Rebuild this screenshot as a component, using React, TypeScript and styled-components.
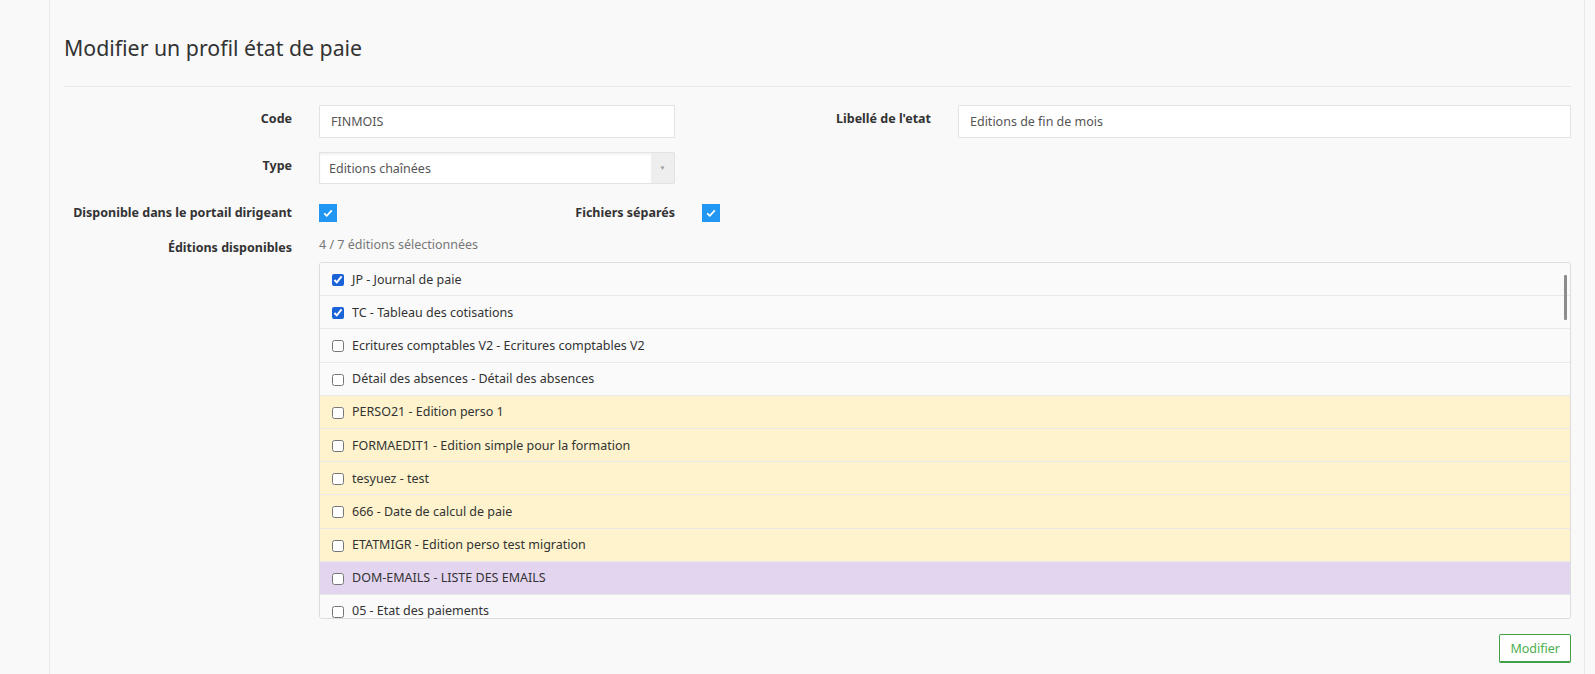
import React from "react";
import styled, { createGlobalStyle } from "styled-components";

const GlobalStyle = createGlobalStyle`
  html, body {
    margin: 0;
    padding: 0;
    background: #f9f9f9;
    font-family: "Noto Sans", "Open Sans", Arial, sans-serif;
    color: #333;
  }
  * { box-sizing: border-box; }
`;

interface Edition {
  label: string;
  checked?: boolean;
  tone?: "plain" | "custom" | "domain";
}

const editions: Edition[] = [
  { label: "JP - Journal de paie", checked: true },
  { label: "TC - Tableau des cotisations", checked: true },
  { label: "Ecritures comptables V2 - Ecritures comptables V2" },
  { label: "Détail des absences - Détail des absences" },
  { label: "PERSO21 - Edition perso 1", tone: "custom" },
  { label: "FORMAEDIT1 - Edition simple pour la formation", tone: "custom" },
  { label: "tesyuez - test", tone: "custom" },
  { label: "666 - Date de calcul de paie", tone: "custom" },
  { label: "ETATMIGR - Edition perso test migration", tone: "custom" },
  { label: "DOM-EMAILS - LISTE DES EMAILS", tone: "domain" },
  { label: "05 - Etat des paiements" },
];

const toneColors = {
  plain: "#fafafa",
  custom: "#fef3cd",
  domain: "#e3d5f0",
};

function BlueCheck() {
  return (
    <CheckBox>
      <svg width="12" height="12" viewBox="0 0 12 12">
        <path d="M2.2 6.4 L4.8 8.8 L9.8 3.4" fill="none" stroke="#fff" strokeWidth="1.8" />
      </svg>
    </CheckBox>
  );
}

export default function App() {
  return (
    <>
      <GlobalStyle />
      <Shell>
        <Gutter />
        <Main>
          <Title>Modifier un profil état de paie</Title>
          <Divider />
          <Form>
            <FormRow>
              <Label>Code</Label>
              <TextInput defaultValue="FINMOIS" />
              <Label>Libellé de l'etat</Label>
              <TextInput defaultValue="Editions de fin de mois" />
            </FormRow>

            <FormRow $mt={14}>
              <Label>Type</Label>
              <Select>
                <SelectValue>Editions chaînées</SelectValue>
                <SelectArrow>▼</SelectArrow>
              </Select>
            </FormRow>

            <FormRow $mt={20}>
              <Label $flat>Disponible dans le portail dirigeant</Label>
              <CheckCell>
                <BlueCheck />
                <Label $flat>Fichiers séparés</Label>
              </CheckCell>
              <BlueCheck />
            </FormRow>

            <FormRow $mt={14}>
              <Label $top={3}>Éditions disponibles</Label>
              <Editions>
                <Count>4 / 7 éditions sélectionnées</Count>
                <ListBox>
                  {editions.map((e) => (
                    <ListRow key={e.label} $tone={e.tone ?? "plain"}>
                      <input type="checkbox" defaultChecked={e.checked} />
                      <span>{e.label}</span>
                    </ListRow>
                  ))}
                  <Thumb />
                </ListBox>
              </Editions>
            </FormRow>

            <Actions>
              <SubmitButton type="button">Modifier</SubmitButton>
            </Actions>
          </Form>
        </Main>
      </Shell>
    </>
  );
}

const Shell = styled.div`
  display: flex;
  min-height: 100vh;
`;

const Gutter = styled.div`
  width: 49px;
  flex: none;
`;

const Main = styled.main`
  width: 1536px;
  min-height: 674px;
  border-left: 1px solid #e8e8e8;
  border-right: 1px solid #e8e8e8;
  padding: 36px 13px 0 14px;
`;

const Title = styled.h1`
  margin: 0;
  font-size: 21.3px;
  line-height: 24px;
  font-weight: 400;
  color: #333;
`;

const Divider = styled.hr`
  margin: 26px 0 0;
  border: none;
  border-top: 1px solid #e8e8e8;
`;

const Form = styled.form`
  padding-top: 18px;
`;

const FormRow = styled.div<{ $mt?: number }>`
  display: grid;
  grid-template-columns: 228px 356px 229px 1fr;
  column-gap: 27px;
  align-items: start;
  margin-top: ${(p) => p.$mt ?? 0}px;
`;

const Label = styled.label<{ $flat?: boolean; $top?: number }>`
  text-align: right;
  font-size: 12.5px;
  font-weight: 700;
  line-height: 18px;
  color: #333;
  padding-top: ${(p) => (p.$flat ? 0 : p.$top ?? 5)}px;
`;

const TextInput = styled.input`
  height: 33px;
  width: 100%;
  border: 1px solid #e3e3e3;
  border-radius: 1px;
  background: #fff;
  padding: 0 11px;
  font-family: inherit;
  font-size: 12.5px;
  color: #555;
  outline: none;
`;

const Select = styled.div`
  display: flex;
  height: 32px;
  border: 1px solid #e3e3e3;
  border-radius: 1px;
  background: #fff;
  box-shadow: inset 0 2px 2px rgba(0, 0, 0, 0.05);
`;

const SelectValue = styled.div`
  flex: 1;
  display: flex;
  align-items: center;
  padding: 0 9px;
  font-size: 12.5px;
  color: #555;
`;

const SelectArrow = styled.div`
  width: 23px;
  display: flex;
  align-items: center;
  justify-content: center;
  background: #eee;
  color: #999;
  font-size: 6px;
`;

const CheckCell = styled.div`
  display: flex;
  justify-content: space-between;
  align-items: center;
`;

const CheckBox = styled.span`
  width: 18px;
  height: 18px;
  display: inline-flex;
  align-items: center;
  justify-content: center;
  background: #2196f3;
`;

const Editions = styled.div`
  grid-column: 2 / -1;
  display: flex;
  flex-direction: column;
`;

const Count = styled.div`
  font-size: 12.5px;
  line-height: 18px;
  color: #777;
  margin-bottom: 8px;
`;

const ListBox = styled.div`
  position: relative;
  height: 357px;
  overflow: hidden;
  border: 1px solid #dcdcdc;
  border-radius: 3px;
  background: #fafafa;
`;

const ListRow = styled.label<{ $tone: keyof typeof toneColors }>`
  display: flex;
  align-items: center;
  gap: 8px;
  height: 33.2px;
  padding-left: 12px;
  border-bottom: 1px solid #e9e9e9;
  background: ${(p) => toneColors[p.$tone]};
  font-size: 12.5px;
  color: #333;

  input {
    margin: 2px 0 0;
    width: 12px;
    height: 12px;
    accent-color: #1a62d8;
  }
`;

const Thumb = styled.div`
  position: absolute;
  top: 12px;
  right: 3px;
  width: 3px;
  height: 45px;
  border-radius: 1px;
  background: #8c8c8c;
`;

const Actions = styled.div`
  display: flex;
  justify-content: flex-end;
  margin-top: 15px;
`;

const SubmitButton = styled.button`
  height: 29px;
  padding: 0 10px;
  border: 1px solid #43a047;
  border-bottom-width: 2px;
  border-radius: 2px;
  background: #fff;
  color: #4caf50;
  font-family: inherit;
  font-size: 12.5px;
  cursor: pointer;
`;
